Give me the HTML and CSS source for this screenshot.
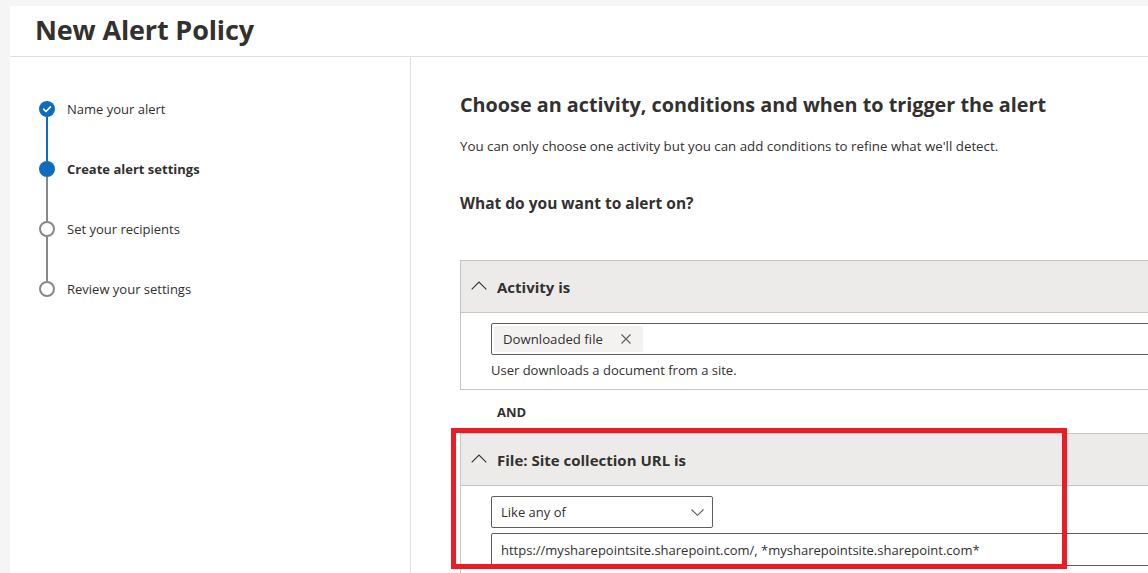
FILE: index.html
```html
<!DOCTYPE html>
<html lang="en">
<head>
    <meta charset="UTF-8">
    <meta name="viewport" content="width=device-width, initial-scale=1.0">
    <title>New Alert Policy</title>
    <link rel="stylesheet" href="styles.css">
</head>
<body>
    <div class="panel">
        <header class="panel-header">
            <h1>New Alert Policy</h1>
        </header>
        <div class="wizard">
            <nav class="steps">
                <div class="step done">
                    <div class="marker">
                        <span class="dot">
                            <svg width="16" height="16" viewBox="0 0 16 16"><path d="M4.6 8.2 L7 10.5 L11.4 5.9" fill="none" stroke="#fff" stroke-width="1.6" stroke-linecap="round" stroke-linejoin="round"/></svg>
                        </span>
                        <span class="line"></span>
                    </div>
                    <span class="label">Name your alert</span>
                </div>
                <div class="step current">
                    <div class="marker">
                        <span class="dot"></span>
                        <span class="line"></span>
                    </div>
                    <span class="label">Create alert settings</span>
                </div>
                <div class="step">
                    <div class="marker">
                        <span class="dot"></span>
                        <span class="line"></span>
                    </div>
                    <span class="label">Set your recipients</span>
                </div>
                <div class="step">
                    <div class="marker">
                        <span class="dot"></span>
                    </div>
                    <span class="label">Review your settings</span>
                </div>
            </nav>

            <main class="content">
                <h2>Choose an activity, conditions and when to trigger the alert</h2>
                <p class="intro">You can only choose one activity but you can add conditions to refine what we'll detect.</p>
                <h3>What do you want to alert on?</h3>

                <section class="card">
                    <div class="card-head">
                        <svg class="chevron" width="16" height="9" viewBox="0 0 16 9"><path d="M0.7 8.3 L8 1 L15.3 8.3" fill="none" stroke="#323130" stroke-width="1.1"/></svg>
                        <span>Activity is</span>
                    </div>
                    <div class="card-body">
                        <div class="field picker">
                            <span class="chip">
                                Downloaded file
                                <svg width="10" height="10" viewBox="0 0 10 10"><path d="M0.5 0.5 L9.5 9.5 M9.5 0.5 L0.5 9.5" stroke="#605e5c" stroke-width="1.1"/></svg>
                            </span>
                        </div>
                        <p class="hint">User downloads a document from a site.</p>
                    </div>
                </section>

                <div class="and">AND</div>

                <div class="marked">
                    <section class="card">
                        <div class="card-head">
                            <svg class="chevron" width="16" height="9" viewBox="0 0 16 9"><path d="M0.7 8.3 L8 1 L15.3 8.3" fill="none" stroke="#323130" stroke-width="1.1"/></svg>
                            <span>File: Site collection URL is</span>
                        </div>
                        <div class="card-body">
                            <div class="field dropdown">
                                <span>Like any of</span>
                                <svg width="13" height="7" viewBox="0 0 13 7"><path d="M0.5 0.5 L6.5 6.3 L12.5 0.5" fill="none" stroke="#605e5c" stroke-width="1.1"/></svg>
                            </div>
                            <div class="field text">https://mysharepointsite.sharepoint.com/, *mysharepointsite.sharepoint.com*</div>
                        </div>
                    </section>
                    <div class="highlight"></div>
                </div>
            </main>
        </div>
    </div>
</body>
</html>
```

FILE: styles.css
```css
body {
    margin: 0;
    background-color: #f5f5f5;
    font-family: "Open Sans", "Segoe UI", Arial, sans-serif;
    color: #323130;
    height: 573px;
    overflow: hidden;
}
.panel {
    margin: 6px 0 0 10px;
    background-color: #fff;
    height: 567px;
    display: flex;
    flex-direction: column;
}
.panel-header {
    height: 46px;
    padding: 0 0 4px 25px;
    border-bottom: 1px solid #e1dfdd;
    display: flex;
    align-items: center;
    flex-shrink: 0;
}
.panel-header h1 {
    margin: 0;
    font-size: 27px;
    font-weight: 700;
    letter-spacing: -0.15px;
}
.wizard {
    display: flex;
    flex: 1;
}

/* left step list */
.steps {
    width: 401px;
    flex-shrink: 0;
    border-right: 1px solid #e1dfdd;
    padding: 44px 0 0 29px;
    box-sizing: border-box;
}
.step {
    display: flex;
    gap: 13px;
}
.marker {
    display: flex;
    flex-direction: column;
    align-items: center;
    width: 16px;
}
.dot {
    width: 16px;
    height: 16px;
    border-radius: 50%;
    box-sizing: border-box;
    border: 2px solid #8a8886;
    background-color: #fff;
    display: flex;
}
.line {
    width: 2px;
    height: 44px;
    background-color: #8a8886;
}
.step.done .dot,
.step.current .dot {
    border: none;
    background-color: #0f6cbd;
}
.step.done .line {
    background-color: #0f6cbd;
}
.label {
    font-size: 13px;
    line-height: 16px;
    margin-left: -1px;
}
.step.current .label {
    font-weight: 700;
}

/* right side */
.content {
    flex: 1;
    padding: 34px 0 0 49px;
    overflow: hidden;
}
.content h2 {
    margin: 0;
    font-size: 19.8px;
    line-height: 28px;
    font-weight: 700;
    white-space: nowrap;
}
.intro {
    margin: 17px 0 0;
    font-size: 13.3px;
    line-height: 20px;
    white-space: nowrap;
}
.content h3 {
    margin: 37px 0 0;
    font-size: 15.5px;
    line-height: 20px;
    font-weight: 700;
}
.card {
    width: 760px;
    border: 1px solid #c8c6c4;
    margin-top: 47px;
}
.card-head {
    height: 51px;
    background-color: #edebe9;
    border-bottom: 1px solid #c8c6c4;
    display: flex;
    align-items: center;
    gap: 10px;
    padding-left: 10px;
    font-size: 15px;
    font-weight: 700;
}
.card-head .chevron {
    margin-top: -2px;
}
.card-body {
    padding: 10px 0 9px 30px;
}
.field {
    box-sizing: border-box;
    height: 32px;
    border: 1px solid #605e5c;
    border-radius: 2px;
    font-size: 13px;
    display: flex;
    align-items: center;
}
.picker {
    padding: 0 2px;
}
.chip {
    height: 26px;
    background-color: #f3f2f1;
    border-radius: 2px;
    display: flex;
    align-items: center;
    gap: 18px;
    padding: 0 12px 0 9px;
    font-size: 13.2px;
}
.hint {
    margin: 5px 0 0;
    font-size: 13px;
    line-height: 20px;
}
.and {
    margin: 12px 0 0 37px;
    font-size: 13px;
    line-height: 20px;
    font-weight: 700;
}
.marked {
    position: relative;
}
.marked .card {
    margin-top: 11px;
    border-bottom: none;
}
.marked .card-body {
    padding-bottom: 8px;
}
.dropdown {
    width: 222px;
    justify-content: space-between;
    padding: 0 8px 0 9px;
}
.text {
    margin-top: 5px;
    height: 33px;
    padding-left: 9px;
}

/* red annotation frame round the second condition */
.highlight {
    position: absolute;
    left: -9px;
    top: -5px;
    width: 616px;
    height: 141px;
    border: 5px solid #ed1c24;
    box-sizing: border-box;
}
```
